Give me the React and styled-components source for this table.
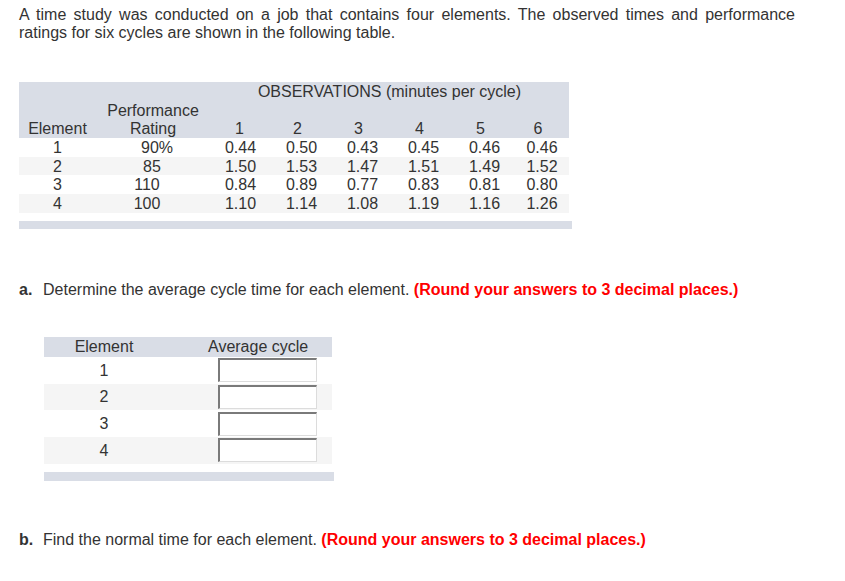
import React from "react";
import styled, { createGlobalStyle } from "styled-components";

const GlobalStyle = createGlobalStyle`
  body {
    margin: 0;
    background: #ffffff;
    font-family: "Liberation Sans", Arial, sans-serif;
    font-size: 16px;
    color: #333333;
  }
`;

const observations = [
  { el: 1, rating: "90%", shift: 4, times: ["0.44", "0.50", "0.43", "0.45", "0.46", "0.46"] },
  { el: 2, rating: "85", shift: -1, times: ["1.50", "1.53", "1.47", "1.51", "1.49", "1.52"] },
  { el: 3, rating: "110", shift: -6, times: ["0.84", "0.89", "0.77", "0.83", "0.81", "0.80"] },
  { el: 4, rating: "100", shift: -6, times: ["1.10", "1.14", "1.08", "1.19", "1.16", "1.26"] },
];

function App() {
  return (
    <Page>
      <GlobalStyle />
      <Intro>
        A time study was conducted on a job that contains four elements. The
        observed times and performance ratings for six cycles are shown in the
        following table.
      </Intro>

      <ObsTable>
        <HeadGrid>
          <Cell />
          <Cell />
          <Cell $span={6}>OBSERVATIONS (minutes per cycle)</Cell>
          <Cell />
          <Cell>Performance</Cell>
          <Cell $span={6} />
          <Cell>Element</Cell>
          <Cell>Rating</Cell>
          {[1, 2, 3, 4, 5, 6].map((n) => (
            <HeadNum key={n} $first={n === 1}>{n}</HeadNum>
          ))}
        </HeadGrid>
        {observations.map((row, i) => (
          <DataRow key={row.el} $alt={i % 2 === 1}>
            <Cell>{row.el}</Cell>
            <Cell $shift={row.shift}>{row.rating}</Cell>
            {row.times.map((t, j) => (
              <Cell key={j}>{t}</Cell>
            ))}
          </DataRow>
        ))}
        <FootBar $width={553} />
      </ObsTable>

      <Question>
        <Label>a.</Label>
        Determine the average cycle time for each element.{" "}
        <Hint>(Round your answers to 3 decimal places.)</Hint>
      </Question>

      <AnswerTable>
        <AnswerHead>
          <AnswerCell>Element</AnswerCell>
          <AnswerLabel>Average cycle</AnswerLabel>
        </AnswerHead>
        {[1, 2, 3, 4].map((n, i) => (
          <AnswerRow key={n} $alt={i % 2 === 1}>
            <AnswerCell>{n}</AnswerCell>
            <InputCell>
              <AnswerInput type="text" />
            </InputCell>
          </AnswerRow>
        ))}
        <FootBar $width={290} $height={9} />
      </AnswerTable>

      <QuestionB>
        <Label>b.</Label>
        Find the normal time for each element.{" "}
        <Hint>(Round your answers to 3 decimal places.)</Hint>
      </QuestionB>
    </Page>
  );
}

export default App;

const Page = styled.div`
  padding: 6px 19px 20px;
`;

const Intro = styled.p`
  margin: 0;
  width: 776px;
  line-height: normal;
  text-align: justify;
`;

const ObsTable = styled.div`
  margin-top: 40px;
  width: 553px;
`;

const columns = "77px 114px repeat(5, 61px) 54px";

const HeadGrid = styled.div`
  display: grid;
  grid-template-columns: ${columns};
  grid-auto-rows: 18.7px;
  width: 550px;
  background: #d9dde6;
  line-height: 18.7px;
`;

const DataRow = styled.div`
  display: grid;
  grid-template-columns: ${columns};
  grid-auto-rows: 18.7px;
  width: 550px;
  line-height: 18.7px;
  background: ${(p) => (p.$alt ? "#f5f5f5" : "#ffffff")};
`;

const Cell = styled.div`
  grid-column: span ${(p) => p.$span || 1};
  text-align: center;
  white-space: nowrap;
  padding-top: 1px;
  padding-left: ${(p) => (p.$shift > 0 ? p.$shift * 2 : 0)}px;
  padding-right: ${(p) => (p.$shift < 0 ? -p.$shift * 2 : 0)}px;
`;

const HeadNum = styled(Cell)`
  padding-right: ${(p) => (p.$first ? 2 : 8)}px;
`;

const FootBar = styled.div`
  margin-top: 8px;
  width: ${(p) => p.$width}px;
  height: ${(p) => p.$height || 8}px;
  background: #d9dde6;
`;

const Question = styled.p`
  margin: 52px 0 0;
  line-height: normal;
`;

const QuestionB = styled(Question)`
  margin-top: 50px;
`;

const Label = styled.b`
  display: inline-block;
  width: 24px;
`;

const Hint = styled.b`
  color: #ff0000;
`;

const AnswerTable = styled.div`
  margin: 38px 0 0 25px;
  width: 290px;
`;

const AnswerHead = styled.div`
  display: grid;
  grid-template-columns: 120px 168px;
  width: 288px;
  height: 20px;
  align-items: center;
  background: #d9dde6;
`;

const AnswerRow = styled.div`
  display: grid;
  grid-template-columns: 120px 168px;
  width: 288px;
  height: 26.75px;
  align-items: center;
  background: ${(p) => (p.$alt ? "#f5f5f5" : "#ffffff")};
`;

const AnswerCell = styled.div`
  text-align: center;
  padding-top: 1px;
`;

const AnswerLabel = styled.div`
  padding: 1px 0 0 44px;
`;

const InputCell = styled.div`
  display: flex;
  padding-left: 54px;
`;

const AnswerInput = styled.input`
  box-sizing: border-box;
  width: 99px;
  height: 24px;
  margin: 0;
  padding: 0 3px;
  background: #ffffff;
  border-top: 2px solid #7a7a7a;
  border-left: 2px solid #7a7a7a;
  border-right: 1px solid #dcdcdc;
  border-bottom: 1px solid #dcdcdc;
  outline: none;
  font: inherit;
`;
